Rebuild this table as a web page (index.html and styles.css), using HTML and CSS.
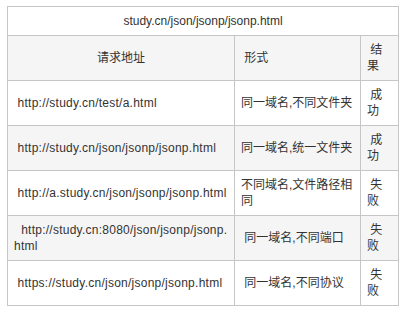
FILE: index.html
```html
<!DOCTYPE html>
<html lang="zh-CN">
<head>
<meta charset="utf-8">
<title>jsonp</title>
<link rel="stylesheet" href="styles.css">
</head>
<body>
<table class="grid">
  <colgroup>
    <col class="c-url">
    <col class="c-form">
    <col class="c-res">
  </colgroup>
  <tr class="row-caption">
    <td colspan="3" class="center">study.cn/json/jsonp/jsonp.html</td>
  </tr>
  <tr class="row-gray">
    <td class="center">请求地址</td>
    <td>&nbsp;形式</td>
    <td>&nbsp;结果</td>
  </tr>
  <tr>
    <td class="url">&nbsp;http://study.cn/test/a.html</td>
    <td>同一域名,不同文件夹</td>
    <td>&nbsp;成功</td>
  </tr>
  <tr class="row-gray">
    <td class="url">&nbsp;http://study.cn/json/jsonp/jsonp.html</td>
    <td>同一域名,统一文件夹</td>
    <td>&nbsp;成功</td>
  </tr>
  <tr>
    <td class="url">&nbsp;http://a.study.cn/json/jsonp/jsonp.html</td>
    <td>不同域名,文件路径相同</td>
    <td>&nbsp;失败</td>
  </tr>
  <tr class="row-gray">
    <td class="url">&nbsp;&nbsp;http://study.cn:8080/json/jsonp/jsonp.<br>html</td>
    <td>&nbsp;同一域名,不同端口</td>
    <td>&nbsp;失败</td>
  </tr>
  <tr>
    <td class="url">&nbsp;https://study.cn/json/jsonp/jsonp.html</td>
    <td>&nbsp;同一域名,不同协议</td>
    <td>&nbsp;失败</td>
  </tr>
</table>
</body>
</html>
```
FILE: styles.css
```css
html, body {
  margin: 0;
  padding: 0;
  background: #ffffff;
}

body {
  padding: 6px 0 0 7px;
  font-family: "Liberation Sans", "Noto Sans CJK SC", sans-serif;
  font-size: 12px;
  line-height: 16px;
  color: #333333;
}

.grid {
  border-collapse: collapse;
  table-layout: fixed;
  width: 391px;
}

.c-url { width: 227px; }
.c-form { width: 126px; }
.c-res { width: 38px; }

.grid td {
  border: 1px solid #c6c6c6;
  padding: 6px;
  vertical-align: middle;
  text-align: left;
}

.grid td.center {
  text-align: center;
}

.grid td.url {
  letter-spacing: 0.25px;
  white-space: nowrap;
}

.row-gray td {
  background: #f5f5f5;
}
```
